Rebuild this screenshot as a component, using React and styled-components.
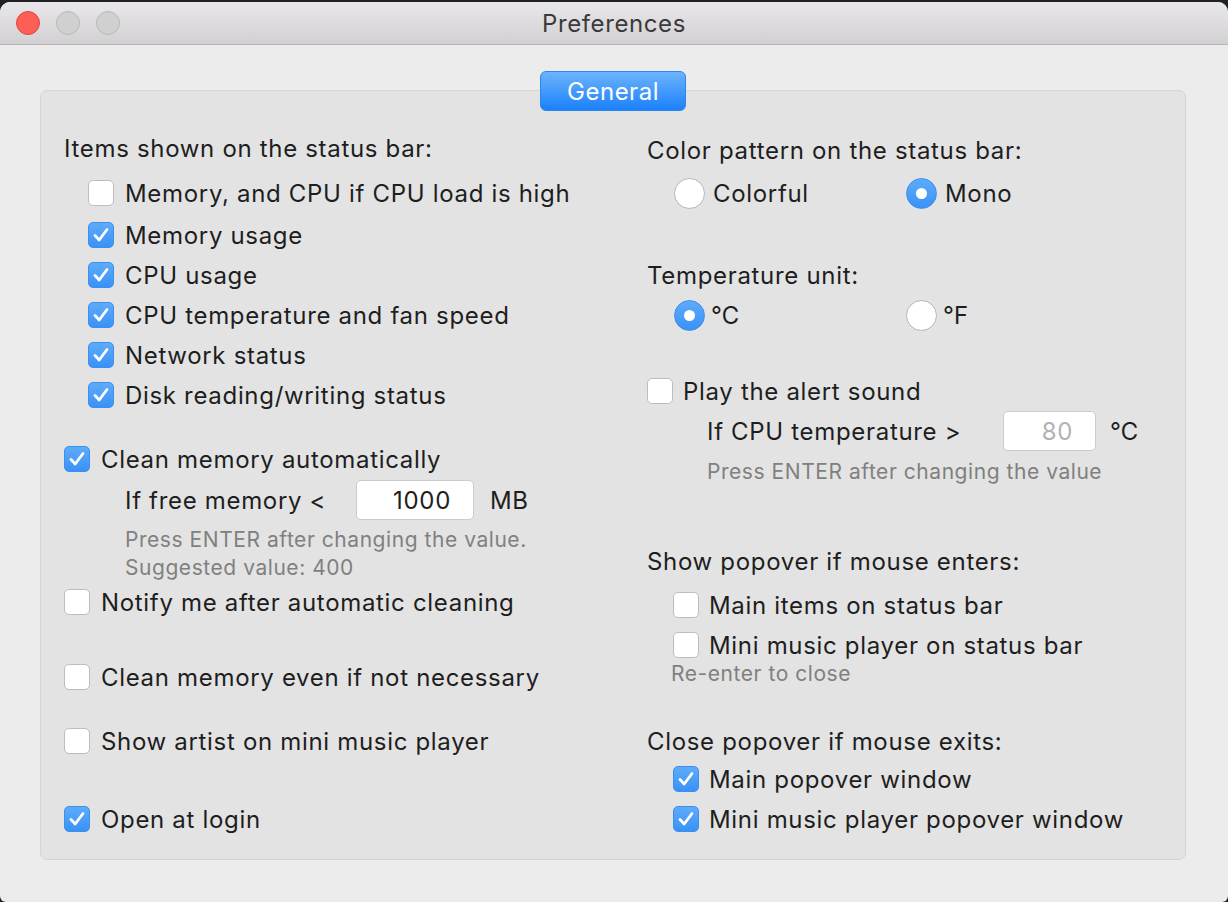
import React from 'react';
import styled, { createGlobalStyle } from 'styled-components';

const GlobalStyle = createGlobalStyle`
    html, body {
        margin: 0;
        padding: 0;
        background: #1f2127;
    }
    body {
        font-family: Inter, "Helvetica Neue", "Liberation Sans", sans-serif;
        -webkit-font-smoothing: antialiased;
    }
`;

const Window = styled.div`
    margin-top: 2px;
    height: 900px;
    background: #ececec;
    border-radius: 10px 10px 6px 6px;
    overflow: hidden;
    display: flex;
    flex-direction: column;
`;

const TitleBar = styled.div`
    height: 42px;
    flex-shrink: 0;
    display: grid;
    grid-template-columns: 1fr auto 1fr;
    align-items: center;
    background: linear-gradient(#e9e7e9, #d2d0d2);
    border-bottom: 1px solid #b4b4b4;
`;

const Lights = styled.div`
    display: flex;
    gap: 16px;
    padding-left: 16px;
`;

const Light = styled.span`
    width: 24px;
    height: 24px;
    border-radius: 50%;
    box-sizing: border-box;
    background: ${p => (p.$red ? '#fd5f57' : '#d1d0d1')};
    border: 1px solid ${p => (p.$red ? '#e2463f' : '#b9b8b9')};
`;

const Title = styled.div`
    font-size: 24px;
    color: #3a3a3a;
    letter-spacing: 0.6px;
`;

const Content = styled.div`
    flex: 1;
    padding: 26px 42px 0 40px;
    display: flex;
    flex-direction: column;
    align-items: center;
`;

const Tab = styled.div`
    position: relative;
    z-index: 1;
    width: 146px;
    height: 40px;
    margin-bottom: -21px;
    box-sizing: border-box;
    border-radius: 6px;
    background: linear-gradient(#6db4fb, #1b80fb);
    border: 1px solid #2c86f2;
    color: #fff;
    font-size: 24px;
    display: flex;
    align-items: center;
    justify-content: center;
    letter-spacing: 0.5px;
`;

const Group = styled.div`
    align-self: stretch;
    background: #e3e3e3;
    border: 1px solid #d5d5d5;
    border-radius: 7px;
    display: grid;
    grid-template-columns: 583px 1fr;
    padding: 37px 0 20px 23px;
`;

const Column = styled.div`
    display: flex;
    flex-direction: column;
`;

const Row = styled.div`
    display: flex;
    align-items: center;
    height: 40px;
    margin-top: ${p => p.$mt || 0}px;
    padding-left: ${p => p.$indent || 0}px;
    font-size: 24px;
    color: #1e1e1e;
    letter-spacing: 0.68px;
    white-space: nowrap;
`;

const Hint = styled.div`
    height: 28px;
    line-height: 28px;
    margin-top: ${p => p.$mt || 0}px;
    padding-left: ${p => p.$indent || 0}px;
    font-size: 21px;
    color: #808080;
    letter-spacing: 0.55px;
    white-space: nowrap;
`;

const Box = styled.span`
    width: 26px;
    height: 26px;
    flex-shrink: 0;
    box-sizing: border-box;
    border-radius: 5px;
    margin-right: ${p => p.$gap || 11}px;
    display: flex;
    align-items: center;
    justify-content: center;
    background: ${p => (p.$on ? 'linear-gradient(#5eabfb, #3a92f6)' : '#fff')};
    border: 1px solid ${p => (p.$on ? '#3a8fef' : '#bdbdbd')};
`;

const RadioGrid = styled.div`
    display: grid;
    grid-template-columns: 232px auto;
    margin-top: ${p => p.$mt || 0}px;
    padding-left: 27px;
`;

const Radio = styled.span`
    width: 31px;
    height: 31px;
    flex-shrink: 0;
    box-sizing: border-box;
    border-radius: 50%;
    margin-right: ${p => p.$gap || 8}px;
    display: flex;
    align-items: center;
    justify-content: center;
    background: ${p => (p.$on ? 'linear-gradient(#5eabfb, #3a92f6)' : '#fff')};
    border: 1px solid ${p => (p.$on ? '#3a8fef' : '#b6b6b6')};
    &::after {
        content: '';
        display: ${p => (p.$on ? 'block' : 'none')};
        width: 11px;
        height: 11px;
        border-radius: 50%;
        background: #fff;
    }
`;

const FieldLabel = styled.span`
    width: ${p => p.$w}px;
    flex-shrink: 0;
`;

const Field = styled.div`
    width: ${p => p.$w}px;
    height: 40px;
    box-sizing: border-box;
    background: #fff;
    border: 1px solid #cbcbcb;
    border-radius: 5px;
    display: flex;
    align-items: center;
    justify-content: flex-end;
    padding-right: 22px;
    color: ${p => (p.$disabled ? '#b3b3b3' : '#1e1e1e')};
    margin-right: ${p => p.$gap}px;
`;

const Check = () => (
    <svg width="18" height="16" viewBox="0 0 18 16">
        <path d="M3 8.5 L7.2 13 L15 2.5" fill="none" stroke="#fff" strokeWidth="2.8" strokeLinecap="round" strokeLinejoin="round" />
    </svg>
);

const CheckRow = ({ on, children, mt, indent, gap }) => (
    <Row $mt={mt} $indent={indent}>
        <Box $on={on} $gap={gap}>{on ? <Check /> : null}</Box>
        {children}
    </Row>
);

const RadioItem = ({ on, children, gap }) => (
    <Row>
        <Radio $on={on} $gap={gap} />
        {children}
    </Row>
);

const App = () => (
    <>
        <GlobalStyle />
        <Window>
            <TitleBar>
                <Lights>
                    <Light $red />
                    <Light />
                    <Light />
                </Lights>
                <Title>Preferences</Title>
                <div />
            </TitleBar>
            <Content>
                <Tab>General</Tab>
                <Group>
                    <Column>
                        <Row>Items shown on the status bar:</Row>
                        <CheckRow mt={5} indent={24}>Memory, and CPU if CPU load is high</CheckRow>
                        <CheckRow on mt={2} indent={24}>Memory usage</CheckRow>
                        <CheckRow on indent={24}>CPU usage</CheckRow>
                        <CheckRow on indent={24}>CPU temperature and fan speed</CheckRow>
                        <CheckRow on indent={24}>Network status</CheckRow>
                        <CheckRow on indent={24}>Disk reading/writing status</CheckRow>
                        <CheckRow on mt={24}>Clean memory automatically</CheckRow>
                        <Row $mt={1} $indent={61}>
                            <FieldLabel $w={231}>If free memory &lt;</FieldLabel>
                            <Field $w={118} $gap={16}>1000</Field>
                            MB
                        </Row>
                        <Hint $mt={6} $indent={61}>Press ENTER after changing the value.</Hint>
                        <Hint $indent={61}>Suggested value: 400</Hint>
                        <CheckRow>Notify me after automatic cleaning</CheckRow>
                        <CheckRow mt={35}>Clean memory even if not necessary</CheckRow>
                        <CheckRow mt={24}>Show artist on mini music player</CheckRow>
                        <CheckRow on mt={38}>Open at login</CheckRow>
                    </Column>
                    <Column>
                        <Row $mt={2}>Color pattern on the status bar:</Row>
                        <RadioGrid $mt={3}>
                            <RadioItem>Colorful</RadioItem>
                            <RadioItem on>Mono</RadioItem>
                        </RadioGrid>
                        <Row $mt={42}>Temperature unit:</Row>
                        <RadioGrid>
                            <RadioItem on gap={6}>℃</RadioItem>
                            <RadioItem gap={6}>℉</RadioItem>
                        </RadioGrid>
                        <CheckRow mt={36} gap={10}>Play the alert sound</CheckRow>
                        <Row $indent={60}>
                            <FieldLabel $w={296}>If CPU temperature &gt;</FieldLabel>
                            <Field $w={93} $gap={14} $disabled>80</Field>
                            ℃
                        </Row>
                        <Hint $mt={7} $indent={60}>Press ENTER after changing the value</Hint>
                        <Row $mt={55}>Show popover if mouse enters:</Row>
                        <CheckRow mt={4} indent={26} gap={10}>Main items on status bar</CheckRow>
                        <CheckRow indent={26} gap={10}>Mini music player on status bar</CheckRow>
                        <Hint $mt={-5} $indent={24}>Re-enter to close</Hint>
                        <Row $mt={33}>Close popover if mouse exits:</Row>
                        <CheckRow on mt={-2} indent={26} gap={10}>Main popover window</CheckRow>
                        <CheckRow on indent={26} gap={10}>Mini music player popover window</CheckRow>
                    </Column>
                </Group>
            </Content>
        </Window>
    </>
);

export default App;
